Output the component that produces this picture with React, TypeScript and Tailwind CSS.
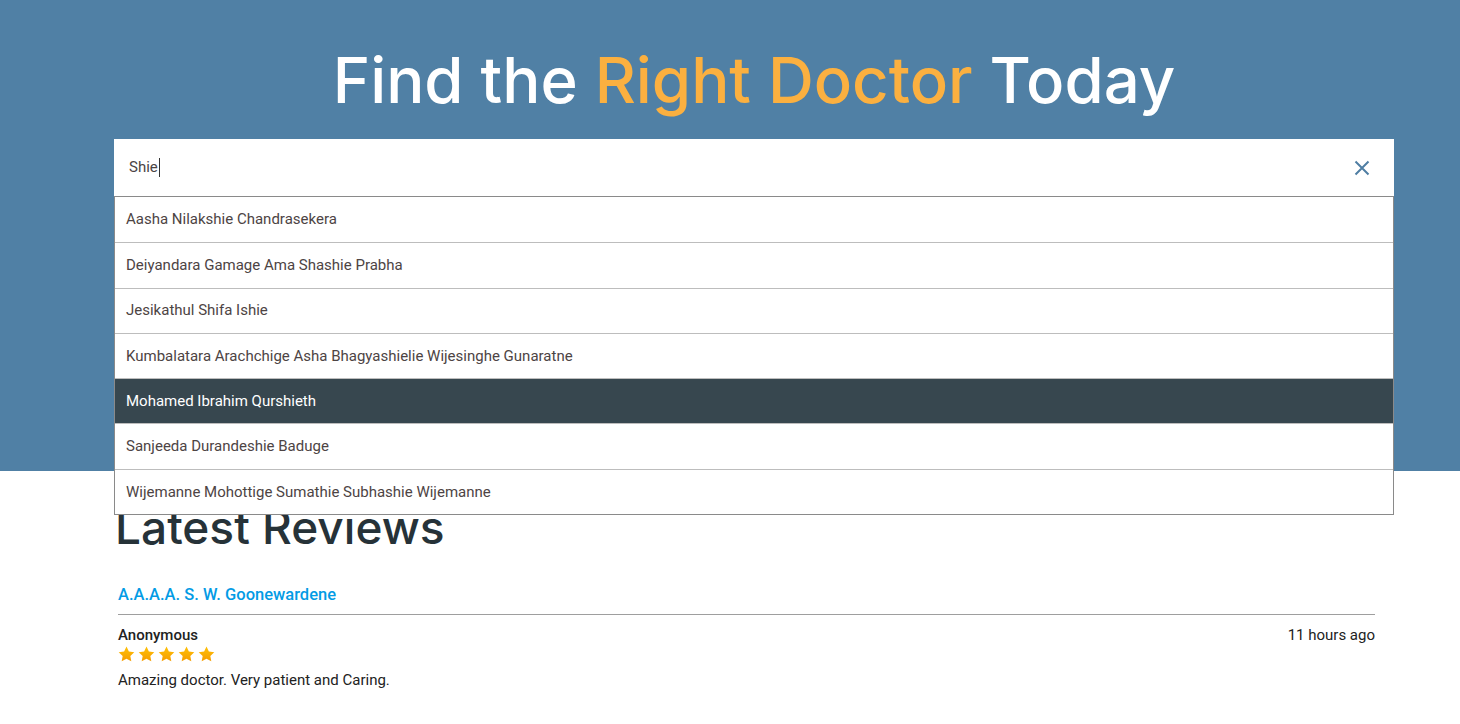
import React from "react";

const names = [
  "Aasha Nilakshie Chandrasekera",
  "Deiyandara Gamage Ama Shashie Prabha",
  "Jesikathul Shifa Ishie",
  "Kumbalatara Arachchige Asha Bhagyashielie Wijesinghe Gunaratne",
  "Mohamed Ibrahim Qurshieth",
  "Sanjeeda Durandeshie Baduge",
  "Wijemanne Mohottige Sumathie Subhashie Wijemanne",
];

function Star() {
  return (
    <svg width="17" height="16" viewBox="0 0 24 23">
      <defs>
        <linearGradient id="sg" x1="0" y1="0" x2="0" y2="1">
          <stop offset="0" stopColor="#ffc107" />
          <stop offset="1" stopColor="#f59c00" />
        </linearGradient>
      </defs>
      <path
        d="M12 0.8l3.4 7.1 7.8 1-5.7 5.4 1.4 7.7L12 18.3l-6.9 3.7 1.4-7.7L0.8 8.9l7.8-1z"
        fill="url(#sg)"
      />
    </svg>
  );
}

export default function App() {
  return (
    <div className="min-h-[724px] bg-white" style={{ fontFamily: "Roboto, 'Liberation Sans', sans-serif" }}>
      <div className="h-[471px] bg-[#5080a5] pt-[41px]">
        <h1
          className="pl-[48px] text-center text-[63.5px] leading-[78px] font-medium text-white"
          style={{ fontFamily: "Inter, 'Open Sans', sans-serif" }}
        >
          Find the <span className="text-[#fbb040]">Right Doctor</span> Today
        </h1>
        <div className="relative ml-[114px] mt-[20px] w-[1280px]">
          <div className="flex h-[57px] items-center bg-white pl-[15px] pr-[24px]">
            <span className="text-[15px] text-[#4a4444]">Shie</span>
            <span className="ml-[1px] h-[19px] w-[1px] bg-[#333]" />
            <div className="flex-1" />
            <svg width="16" height="16" viewBox="0 0 16 16">
              <path d="M1.5 1.5L14.5 14.5M14.5 1.5L1.5 14.5" stroke="#4f7ea3" strokeWidth="2" />
            </svg>
          </div>
          <div className="absolute left-0 right-0 top-[57px] z-10 border border-[#8a8a8a] bg-white">
            {names.map((n, i) => (
              <div
                key={n}
                className={
                  "flex h-[45.3px] items-center px-[11px] text-[15px] " +
                  (i > 0 ? "border-t border-[#bdbdbd] " : "") +
                  (i === 4 ? "bg-[#37474f] text-white" : "bg-white text-[#4d4444]")
                }
              >
                {n}
              </div>
            ))}
          </div>
        </div>
      </div>
      <div className="ml-[115px] w-[1280px] pt-[28px]">
        <h2
          className="text-[46px] leading-[56px] font-medium text-[#263238]"
          style={{ fontFamily: "Inter, 'Open Sans', sans-serif" }}
        >
          Latest Reviews
        </h2>
        <div className="ml-[3px] mr-[20px] mt-[30px]">
          <div className="text-[16.5px] font-medium text-[#039be5] leading-[20px]">A.A.A.A. S. W. Goonewardene</div>
          <div className="mt-[9px] border-t border-[#9e9e9e]" />
          <div className="mt-[11px] flex justify-between text-[15px] leading-[18px] text-[#222]">
            <span className="font-medium">Anonymous</span>
            <span>11 hours ago</span>
          </div>
          <div className="mt-[2px] flex gap-[3px]">
            <Star />
            <Star />
            <Star />
            <Star />
            <Star />
          </div>
          <div className="mt-[9px] text-[15px] leading-[18px] text-[#222]">Amazing doctor. Very patient and Caring.</div>
        </div>
      </div>
    </div>
  );
}
